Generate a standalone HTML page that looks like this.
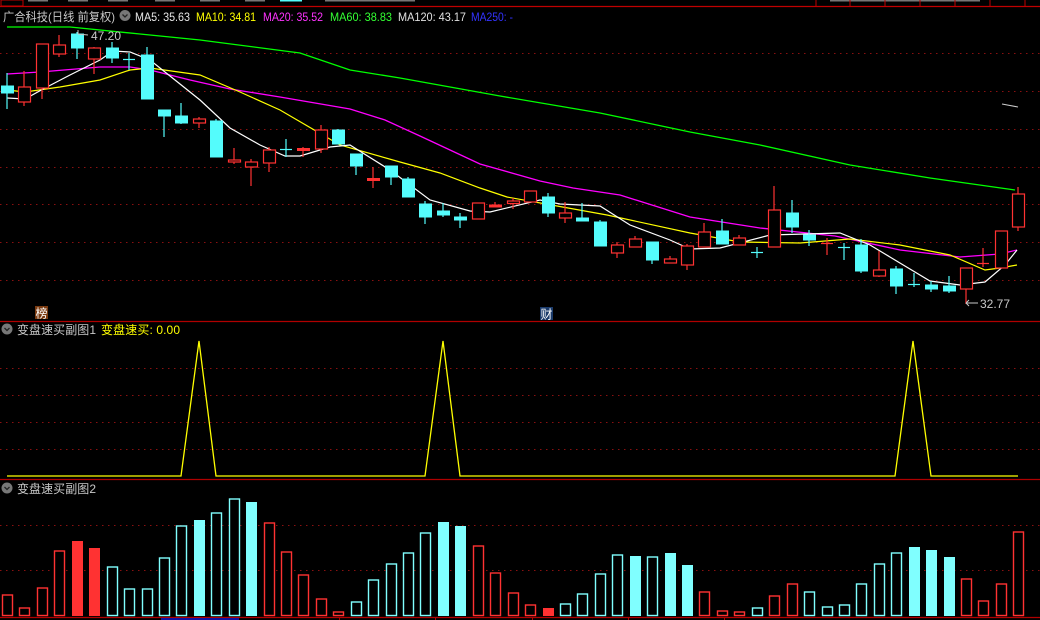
<!DOCTYPE html>
<html><head><meta charset="utf-8"><style>
html,body{margin:0;padding:0;background:#000;width:1040px;height:620px;overflow:hidden}
svg{display:block}
text{font-family:"Liberation Sans","Noto Sans CJK SC",sans-serif;font-size:12px}
.r{fill:#000;stroke:#ff3232;stroke-width:1.2}
.rf{fill:#ff3232;stroke:#ff3232}
.c{fill:#54fcfc;stroke:#54fcfc}
.wr{stroke:#ff3232;stroke-width:1.2}
.wc{stroke:#54fcfc;stroke-width:1.2}
.g{stroke:#8a1010;stroke-dasharray:1.5 4.5;stroke-width:1}
.hr{fill:#000;stroke:#ff3232;stroke-width:1.4}
.hrf{fill:#ff3232}
.hc{fill:#000;stroke:#80ffff;stroke-width:1.4}
.hcf{fill:#80ffff}
</style></head><body>
<svg width="1040" height="620" viewBox="0 0 1040 620">
<!-- top strip -->
<line x1="0" y1="6.5" x2="1040" y2="6.5" stroke="#c00000" stroke-width="1.2"/>
<rect x="1" y="0" width="22" height="6" fill="none" stroke="#c00000"/>
<g fill="#777"><rect x="28" y="0" width="20" height="1.5"/><rect x="68" y="0" width="20" height="1.5"/><rect x="108" y="0" width="20" height="1.5"/><rect x="155" y="0" width="20" height="1.5"/><rect x="200" y="0" width="20" height="1.5"/><rect x="245" y="0" width="20" height="1.5"/><rect x="325" y="0" width="90" height="1.5"/><rect x="830" y="0" width="150" height="1.5"/></g>
<rect x="280" y="0" width="22" height="1.5" fill="#54fcfc"/>
<g stroke="#c00000"><line x1="816" y1="0" x2="816" y2="6"/><line x1="850" y1="0" x2="850" y2="6"/><line x1="885" y1="0" x2="885" y2="6"/><line x1="920" y1="0" x2="920" y2="6"/><line x1="955" y1="0" x2="955" y2="6"/><line x1="990" y1="0" x2="990" y2="6"/><line x1="1025" y1="0" x2="1025" y2="6"/></g>

<!-- header -->
<text x="3" y="21" fill="#c8c8c8" textLength="112" lengthAdjust="spacingAndGlyphs">广合科技(日线 前复权)</text>
<circle cx="125" cy="15.5" r="5.5" fill="#777"/><path d="M122.5 14.5 L125 17 L127.5 14.5" stroke="#222" stroke-width="1.3" fill="none"/>
<text x="135" y="21" fill="#e8e8e8" textLength="55" lengthAdjust="spacingAndGlyphs">MA5: 35.63</text>
<text x="196" y="21" fill="#ffff00" textLength="60" lengthAdjust="spacingAndGlyphs">MA10: 34.81</text>
<text x="263" y="21" fill="#ff33ff" textLength="60" lengthAdjust="spacingAndGlyphs">MA20: 35.52</text>
<text x="330" y="21" fill="#33ff33" textLength="62" lengthAdjust="spacingAndGlyphs">MA60: 38.83</text>
<text x="398" y="21" fill="#e0e0e0" textLength="68" lengthAdjust="spacingAndGlyphs">MA120: 43.17</text>
<text x="471" y="21" fill="#3333ff" textLength="42" lengthAdjust="spacingAndGlyphs">MA250: -</text>

<!-- main grid -->
<g class="g"><line x1="0" y1="53.5" x2="1040" y2="53.5"/><line x1="0" y1="91.5" x2="1040" y2="91.5"/><line x1="0" y1="129.5" x2="1040" y2="129.5"/><line x1="0" y1="167.5" x2="1040" y2="167.5"/><line x1="0" y1="204.5" x2="1040" y2="204.5"/><line x1="0" y1="242.5" x2="1040" y2="242.5"/><line x1="0" y1="280.5" x2="1040" y2="280.5"/></g>

<!-- MAs -->
<polyline fill="none" stroke="#00ff00" stroke-width="1.3" points="7,27 70,27 140,34 200,40 300,53 350,70 400,78 500,96 600,113 690,132 760,145 850,165 930,178 1015,190"/>
<polyline fill="none" stroke="#ff00ff" stroke-width="1.3" points="7,74 40,72 100,67 130,67 150,70 190,80 230,89 280,97 350,109 385,120 420,136 480,164 540,181 573,188 620,195 690,217 760,228 835,236 900,250 960,257 1000,254 1017,250"/>
<polyline fill="none" stroke="#ffff00" stroke-width="1.2" points="7,90 25,92 60,87 100,80 130,70 150,68 200,75 240,92 280,110 340,145 400,162 440,173 480,188 507,197 557,206 607,215 690,233 740,242 800,243 850,239 900,245 950,255 985,270 1000,268 1017,265"/>
<polyline fill="none" stroke="#ffffff" stroke-width="1.2" points="7,98 25,99 45,88 70,75 100,60 113,51 130,52 150,60 175,80 200,100 230,128 260,145 285,156 300,156 330,147 350,145 390,170 430,200 470,211 490,212 540,200 560,204 600,206 630,225 670,240 690,249 720,248 770,235 840,233 870,245 930,281 960,285 985,282 1005,265 1017,250"/>

<!-- candles -->
<line class="wc" x1="7" y1="73" x2="7" y2="109"/><rect class="c" x="1.5" y="86" width="12" height="7"/>
<line class="wr" x1="24" y1="71" x2="24" y2="106"/><rect class="r" x="18.5" y="87" width="12" height="15"/>
<line class="wr" x1="42" y1="44" x2="42" y2="99"/><rect class="r" x="36.5" y="44" width="12" height="44"/>
<line class="wr" x1="59" y1="35" x2="59" y2="57"/><rect class="r" x="53.5" y="45" width="12" height="9"/>
<line class="wc" x1="77" y1="32" x2="77" y2="59"/><rect class="c" x="71.5" y="34" width="12" height="14"/>
<line class="wr" x1="94" y1="47" x2="94" y2="74"/><rect class="r" x="88.5" y="48" width="12" height="11"/>
<line class="wc" x1="112" y1="42" x2="112" y2="63"/><rect class="c" x="106.5" y="48" width="12" height="10"/>
<line class="wc" x1="129" y1="53" x2="129" y2="70"/><line class="wc" x1="123" y1="59.5" x2="135" y2="59.5"/>
<line class="wc" x1="147" y1="47" x2="147" y2="99"/><rect class="c" x="141.5" y="55" width="12" height="44"/>
<line class="wc" x1="164" y1="110" x2="164" y2="137"/><rect class="c" x="158.5" y="110" width="12" height="6"/>
<line class="wc" x1="181" y1="103" x2="181" y2="124"/><rect class="c" x="175.5" y="116" width="12" height="7"/>
<line class="wr" x1="199" y1="117" x2="199" y2="128"/><rect class="r" x="193.5" y="119" width="12" height="4"/>
<line class="wc" x1="216" y1="119" x2="216" y2="157"/><rect class="c" x="210.5" y="121" width="12" height="36"/>
<line class="wr" x1="234" y1="148" x2="234" y2="164"/><rect class="r" x="228.5" y="160" width="12" height="2"/>
<line class="wr" x1="251" y1="159" x2="251" y2="186"/><rect class="r" x="245.5" y="162" width="12" height="5"/>
<line class="wr" x1="269" y1="147" x2="269" y2="172"/><rect class="r" x="263.5" y="150" width="12" height="13"/>
<line class="wc" x1="286" y1="139" x2="286" y2="157"/><line class="wc" x1="280" y1="149.5" x2="292" y2="149.5"/>
<line class="wr" x1="303" y1="147" x2="303" y2="157"/><rect class="rf" x="297.5" y="148.5" width="12" height="2"/>
<line class="wr" x1="321" y1="125" x2="321" y2="153"/><rect class="r" x="315.5" y="130" width="12" height="19"/>
<line class="wc" x1="338" y1="129" x2="338" y2="144"/><rect class="c" x="332.5" y="130" width="12" height="14"/>
<line class="wc" x1="356" y1="154" x2="356" y2="175"/><rect class="c" x="350.5" y="154" width="12" height="12"/>
<line class="wr" x1="373" y1="167" x2="373" y2="188"/><rect class="rf" x="367.5" y="178.5" width="12" height="2"/>
<line class="wc" x1="391" y1="166" x2="391" y2="185"/><rect class="c" x="385.5" y="166" width="12" height="11"/>
<line class="wc" x1="408" y1="177" x2="408" y2="197"/><rect class="c" x="402.5" y="179" width="12" height="18"/>
<line class="wc" x1="425" y1="201" x2="425" y2="224"/><rect class="c" x="419.5" y="204" width="12" height="13"/>
<line class="wc" x1="443" y1="203" x2="443" y2="217"/><rect class="c" x="437.5" y="211" width="12" height="4"/>
<line class="wc" x1="460" y1="213" x2="460" y2="228"/><rect class="c" x="454.5" y="217" width="12" height="3"/>
<rect class="r" x="472.5" y="203" width="12" height="16"/>
<line class="wr" x1="495" y1="202" x2="495" y2="207"/><rect class="rf" x="489.5" y="205" width="12" height="2"/>
<line class="wr" x1="513" y1="198" x2="513" y2="209"/><rect class="r" x="507.5" y="201" width="12" height="2.5"/>
<rect class="r" x="524.5" y="191" width="12" height="11"/>
<line class="wc" x1="548" y1="193" x2="548" y2="217"/><rect class="c" x="542.5" y="197" width="12" height="16"/>
<line class="wr" x1="565" y1="202" x2="565" y2="223"/><rect class="r" x="559.5" y="213" width="12" height="5"/>
<line class="wc" x1="582" y1="203" x2="582" y2="221"/><rect class="c" x="576.5" y="218" width="12" height="3"/>
<line class="wc" x1="600" y1="220" x2="600" y2="246"/><rect class="c" x="594.5" y="222" width="12" height="24"/>
<line class="wr" x1="617" y1="242" x2="617" y2="258"/><rect class="r" x="611.5" y="245" width="12" height="8"/>
<line class="wr" x1="635" y1="236" x2="635" y2="247"/><rect class="r" x="629.5" y="239" width="12" height="8"/>
<line class="wc" x1="652" y1="242" x2="652" y2="264"/><rect class="c" x="646.5" y="242" width="12" height="18"/>
<line class="wr" x1="670" y1="256" x2="670" y2="263"/><rect class="r" x="664.5" y="259" width="12" height="4"/>
<line class="wr" x1="687" y1="244" x2="687" y2="270"/><rect class="r" x="681.5" y="246" width="12" height="19"/>
<line class="wr" x1="704" y1="223" x2="704" y2="247"/><rect class="r" x="698.5" y="232" width="12" height="15"/>
<line class="wc" x1="722" y1="219" x2="722" y2="244"/><rect class="c" x="716.5" y="231" width="12" height="13"/>
<line class="wr" x1="739" y1="235" x2="739" y2="245"/><rect class="r" x="733.5" y="238" width="12" height="7"/>
<line class="wc" x1="757" y1="247" x2="757" y2="258"/><line class="wc" x1="751" y1="252.5" x2="763" y2="252.5"/>
<line class="wr" x1="774" y1="186" x2="774" y2="247"/><rect class="r" x="768.5" y="210" width="12" height="37"/>
<line class="wc" x1="792" y1="200" x2="792" y2="233"/><rect class="c" x="786.5" y="213" width="12" height="14"/>
<line class="wc" x1="809" y1="230" x2="809" y2="246"/><rect class="c" x="803.5" y="235" width="12" height="5"/>
<line class="wr" x1="827" y1="238" x2="827" y2="255"/><line class="wr" x1="821" y1="243.5" x2="833" y2="243.5"/>
<line class="wc" x1="844" y1="243" x2="844" y2="260"/><line class="wc" x1="838" y1="247.5" x2="850" y2="247.5"/>
<line class="wc" x1="861" y1="239" x2="861" y2="273"/><rect class="c" x="855.5" y="245" width="12" height="26"/>
<line class="wr" x1="879" y1="251" x2="879" y2="277"/><rect class="r" x="873.5" y="270" width="12" height="6"/>
<line class="wc" x1="896" y1="266" x2="896" y2="294"/><rect class="c" x="890.5" y="269" width="12" height="17"/>
<line class="wc" x1="914" y1="273" x2="914" y2="287"/><line class="wc" x1="908" y1="284.5" x2="920" y2="284.5"/>
<line class="wc" x1="931" y1="281" x2="931" y2="292"/><rect class="c" x="925.5" y="285" width="12" height="4"/>
<line class="wc" x1="949" y1="276" x2="949" y2="293"/><rect class="c" x="943.5" y="286" width="12" height="5"/>
<line class="wr" x1="966" y1="268" x2="966" y2="304"/><rect class="r" x="960.5" y="268" width="12" height="21"/>
<line class="wr" x1="983" y1="248" x2="983" y2="267"/><line class="wr" x1="977" y1="263.5" x2="989" y2="263.5"/>
<rect class="r" x="995.5" y="231" width="12" height="37"/>
<line class="wr" x1="1018" y1="187" x2="1018" y2="231"/><rect class="r" x="1012.5" y="194" width="12" height="33"/>

<!-- annotations -->
<text x="91" y="40" fill="#c8c8c8" font-size="12">47.20</text>
<path d="M78 34 L78 30 M78 34 L88 35" stroke="#c8c8c8" fill="none"/>
<text x="980" y="308" fill="#c8c8c8">32.77</text>
<path d="M966 303 L978 303 M966 303 L969 300 M966 303 L969 306" stroke="#c8c8c8" fill="none"/>
<line x1="1002" y1="104" x2="1018" y2="107" stroke="#ccc"/>
<rect x="35" y="306" width="13" height="13" fill="#7a3a10"/><text x="35.5" y="317.5" fill="#fff" font-size="12">榜</text>
<rect x="540" y="307" width="13" height="13" fill="#1a3a6a"/><text x="540.5" y="318.5" fill="#fff" font-size="12">财</text>

<!-- sub1 -->
<line x1="0" y1="321.5" x2="1040" y2="321.5" stroke="#b00000" stroke-width="1.2"/>
<circle cx="7" cy="329" r="5.5" fill="#777"/><path d="M4.5 328 L7 330.5 L9.5 328" stroke="#222" stroke-width="1.3" fill="none"/>
<text x="17" y="334" fill="#c8c8c8" textLength="79">变盘速买副图1</text>
<text x="101" y="334" fill="#ffff00" textLength="79">变盘速买: 0.00</text>
<g class="g"><line x1="0" y1="368.5" x2="1040" y2="368.5"/><line x1="0" y1="395.5" x2="1040" y2="395.5"/><line x1="0" y1="422.5" x2="1040" y2="422.5"/><line x1="0" y1="449.5" x2="1040" y2="449.5"/></g>
<polyline fill="none" stroke="#ffff00" stroke-width="1.3" points="7,476 181,476 199,341 216,476 425,476 443,341 460,476 895,476 913,341 931,476 1018,476"/>
<line x1="0" y1="479.5" x2="1040" y2="479.5" stroke="#b00000" stroke-width="1.2"/>

<!-- sub2 -->
<circle cx="7" cy="488" r="5.5" fill="#777"/><path d="M4.5 487 L7 489.5 L9.5 487" stroke="#222" stroke-width="1.3" fill="none"/>
<text x="17" y="493" fill="#c8c8c8" textLength="79">变盘速买副图2</text>
<g class="g"><line x1="0" y1="525.5" x2="1040" y2="525.5"/><line x1="0" y1="570.5" x2="1040" y2="570.5"/></g>

<rect class="hr" x="2.5" y="595" width="10" height="20.5"/>
<rect class="hr" x="19.5" y="608" width="10" height="7.5"/>
<rect class="hr" x="37.5" y="588" width="10" height="27.5"/>
<rect class="hr" x="54.5" y="551" width="10" height="64.5"/>
<rect class="hrf" x="72" y="541" width="11" height="75"/>
<rect class="hrf" x="89" y="548" width="11" height="68"/>
<rect class="hc" x="107.5" y="567" width="10" height="48.5"/>
<rect class="hc" x="124.5" y="589" width="10" height="26.5"/>
<rect class="hc" x="142.5" y="589" width="10" height="26.5"/>
<rect class="hc" x="159.5" y="558" width="10" height="57.5"/>
<rect class="hc" x="176.5" y="526" width="10" height="89.5"/>
<rect class="hcf" x="194" y="520" width="11" height="96"/>
<rect class="hc" x="211.5" y="513" width="10" height="102.5"/>
<rect class="hc" x="229.5" y="499" width="10" height="116.5"/>
<rect class="hcf" x="246" y="502" width="11" height="114"/>
<rect class="hr" x="264.5" y="523" width="10" height="92.5"/>
<rect class="hr" x="281.5" y="552" width="10" height="63.5"/>
<rect class="hr" x="298.5" y="575" width="10" height="40.5"/>
<rect class="hr" x="316.5" y="599" width="10" height="16.5"/>
<rect class="hr" x="333.5" y="612" width="10" height="3.5"/>
<rect class="hc" x="351.5" y="602" width="10" height="13.5"/>
<rect class="hc" x="368.5" y="580" width="10" height="35.5"/>
<rect class="hc" x="386.5" y="564" width="10" height="51.5"/>
<rect class="hc" x="403.5" y="553" width="10" height="62.5"/>
<rect class="hc" x="420.5" y="533" width="10" height="82.5"/>
<rect class="hcf" x="438" y="522" width="11" height="94"/>
<rect class="hcf" x="455" y="526" width="11" height="90"/>
<rect class="hr" x="473.5" y="546" width="10" height="69.5"/>
<rect class="hr" x="490.5" y="573" width="10" height="42.5"/>
<rect class="hr" x="508.5" y="593" width="10" height="22.5"/>
<rect class="hr" x="525.5" y="605" width="10" height="10.5"/>
<rect class="hrf" x="543" y="608" width="11" height="8"/>
<rect class="hc" x="560.5" y="604" width="10" height="11.5"/>
<rect class="hc" x="577.5" y="594" width="10" height="21.5"/>
<rect class="hc" x="595.5" y="574" width="10" height="41.5"/>
<rect class="hc" x="612.5" y="555" width="10" height="60.5"/>
<rect class="hcf" x="630" y="556" width="11" height="60"/>
<rect class="hc" x="647.5" y="557" width="10" height="58.5"/>
<rect class="hcf" x="665" y="553" width="11" height="63"/>
<rect class="hcf" x="682" y="565" width="11" height="51"/>
<rect class="hr" x="699.5" y="592" width="10" height="23.5"/>
<rect class="hr" x="717.5" y="611" width="10" height="4.5"/>
<rect class="hr" x="734.5" y="612" width="10" height="3.5"/>
<rect class="hc" x="752.5" y="608" width="10" height="7.5"/>
<rect class="hr" x="769.5" y="596" width="10" height="19.5"/>
<rect class="hr" x="787.5" y="584" width="10" height="31.5"/>
<rect class="hc" x="804.5" y="592" width="10" height="23.5"/>
<rect class="hc" x="822.5" y="607" width="10" height="8.5"/>
<rect class="hc" x="839.5" y="605" width="10" height="10.5"/>
<rect class="hc" x="856.5" y="584" width="10" height="31.5"/>
<rect class="hc" x="874.5" y="564" width="10" height="51.5"/>
<rect class="hc" x="891.5" y="553" width="10" height="62.5"/>
<rect class="hcf" x="909" y="547" width="11" height="69"/>
<rect class="hcf" x="926" y="550" width="11" height="66"/>
<rect class="hcf" x="944" y="557" width="11" height="59"/>
<rect class="hr" x="961.5" y="579" width="10" height="36.5"/>
<rect class="hr" x="978.5" y="601" width="10" height="14.5"/>
<rect class="hr" x="996.5" y="584" width="10" height="31.5"/>
<rect class="hr" x="1013.5" y="532" width="10" height="83.5"/>

<line x1="0" y1="617.5" x2="1040" y2="617.5" stroke="#b00000" stroke-width="1.2"/>
<rect x="161" y="618" width="78" height="2" fill="#1010a0"/>
<g stroke="#b00000"><line x1="339.5" y1="617" x2="339.5" y2="620"/><line x1="435.5" y1="617" x2="435.5" y2="620"/><line x1="532.5" y1="617" x2="532.5" y2="620"/><line x1="628.5" y1="617" x2="628.5" y2="620"/><line x1="724.5" y1="617" x2="724.5" y2="620"/></g>
</svg>
</body></html>
